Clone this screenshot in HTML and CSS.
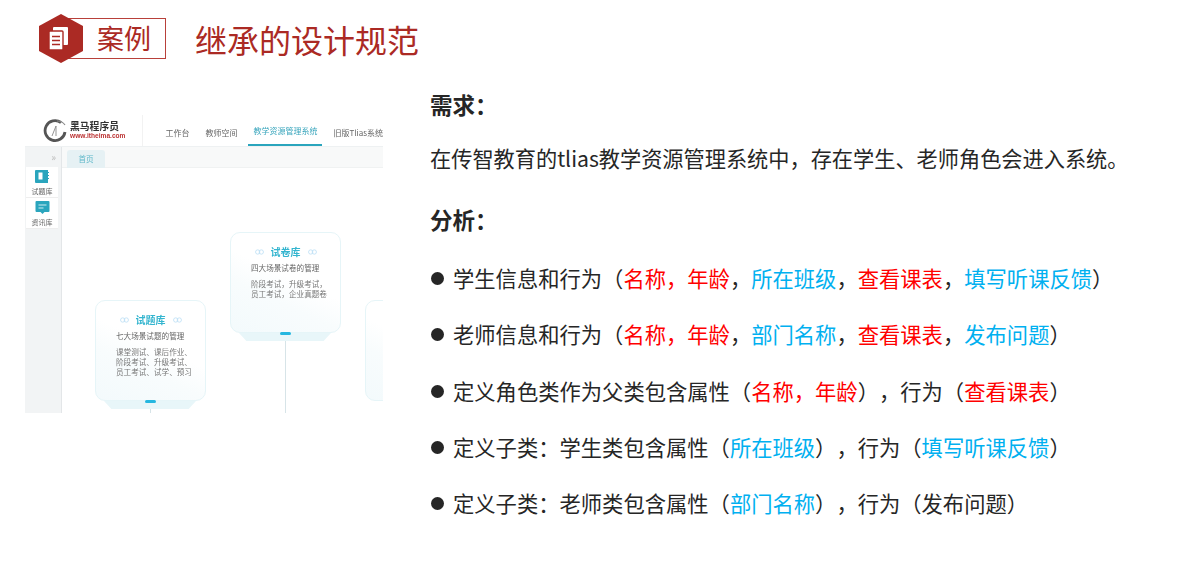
FILE: index.html
```html
<!DOCTYPE html>
<html lang="zh-CN">
<head>
<meta charset="utf-8">
<title>继承的设计规范</title>
<link rel="stylesheet" href="styles.css">
</head>
<body>
<header class="header">
  <div class="badge">
    <svg class="hex" viewBox="0 0 44 49" width="44" height="49">
      <polygon points="22,0 44,12 44,37 22,49 0,37 0,12" fill="#ab2a24"/>
      <rect x="14" y="13" width="15" height="18" rx="1" fill="#fff"/>
      <rect x="10" y="17" width="14" height="19" rx="1" fill="#fff" stroke="#ab2a24" stroke-width="1.4"/>
      <path d="M13 22.5h8M13 26.5h8M13 30.5h8" stroke="#ab2a24" stroke-width="1.5"/>
    </svg>
    <div class="tag">案例</div>
  </div>
  <h1 class="title">继承的设计规范</h1>
</header>
<main class="main">
  <section class="shot">
    <div class="topbar">
      <div class="logo">
        <svg viewBox="0 0 24 24" width="24" height="24"><path d="M18 3.5A10 10 0 1 0 22 13" fill="none" stroke="#555" stroke-width="2.8"/><path d="M22 6c-2-3-5-4-8-4" fill="none" stroke="#888" stroke-width="1.2"/><path d="M9 17l4-10v10" fill="none" stroke="#888" stroke-width=".9"/></svg>
        <div class="logo-text"><b>黑马程序员</b><span>www.itheima.com</span></div>
      </div>
      <nav class="nav">
        <span class="nav-item">工作台</span>
        <span class="nav-item">教师空间</span>
        <span class="nav-item active">教学资源管理系统</span>
        <span class="nav-item">旧版Tlias系统</span>
      </nav>
    </div>
    <div class="body">
      <aside class="side">
        <div class="collapse">»</div>
        <div class="side-item">
          <svg viewBox="0 0 14 14" width="14" height="14"><path d="M1 0h12v2h1v1h-1v2h1v1h-1v2h1v1h-1v4H1a1 1 0 0 1-1-1V1a1 1 0 0 1 1-1z" fill="#2aa5bd"/><rect x="3.5" y="2.5" width="4" height="7" fill="#fff"/></svg>
          <span>试题库</span>
        </div>
        <div class="side-item">
          <svg viewBox="0 0 14 14" width="15" height="14"><path d="M1 0h12a1 1 0 0 1 1 1v9a1 1 0 0 1-1 1H9l-2 2-2-2H1a1 1 0 0 1-1-1V1a1 1 0 0 1 1-1z" fill="#2aa5bd"/><path d="M3 4h8M3 7h5" stroke="#cfecf2"/></svg>
          <span>资讯库</span>
        </div>
      </aside>
      <div class="content">
        <div class="tabs"><span class="tab">首页</span></div>
        <div class="canvas">
          <div class="line line-a"></div>
          <div class="line line-b"></div>
          <div class="base base-a"></div>
          <div class="base base-b"></div>
          <article class="card card-a">
            <h3 class="card-title">
              <svg class="eye" viewBox="0 0 10 6" width="9" height="6"><circle cx="3" cy="3" r="2.4"/><circle cx="7" cy="3" r="2.4"/></svg>
              <span>试题库</span>
              <svg class="eye" viewBox="0 0 10 6" width="9" height="6"><circle cx="3" cy="3" r="2.4"/><circle cx="7" cy="3" r="2.4"/></svg>
            </h3>
            <p class="card-sub">七大场景试题的管理</p>
            <p class="card-text">课堂测试、课后作业、<br>阶段考试、升级考试、<br>员工考试、试学、预习</p>
          </article>
          <article class="card card-b">
            <h3 class="card-title">
              <svg class="eye" viewBox="0 0 10 6" width="9" height="6"><circle cx="3" cy="3" r="2.4"/><circle cx="7" cy="3" r="2.4"/></svg>
              <span>试卷库</span>
              <svg class="eye" viewBox="0 0 10 6" width="9" height="6"><circle cx="3" cy="3" r="2.4"/><circle cx="7" cy="3" r="2.4"/></svg>
            </h3>
            <p class="card-sub">四大场景试卷的管理</p>
            <p class="card-text">阶段考试，升级考试，<br>员工考试，企业真题卷</p>
          </article>
          <article class="card card-c"></article>
        </div>
      </div>
    </div>
  </section>
  <section class="text">
    <h2 class="head">需求：</h2>
    <p class="para">在传智教育的tlias教学资源管理系统中，存在学生、老师角色会进入系统。</p>
    <h2 class="head head-2">分析：</h2>
    <ul class="list">
      <li>学生信息和行为（<span class="r">名称，年龄</span>，<span class="b">所在班级</span>，<span class="r">查看课表</span>，<span class="b">填写听课反馈</span>）</li>
      <li>老师信息和行为（<span class="r">名称，年龄</span>，<span class="b">部门名称</span>，<span class="r">查看课表</span>，<span class="b">发布问题</span>）</li>
      <li>定义角色类作为父类包含属性（<span class="r">名称，年龄</span>），行为（<span class="r">查看课表</span>）</li>
      <li>定义子类：学生类包含属性（<span class="b">所在班级</span>），行为（<span class="b">填写听课反馈</span>）</li>
      <li>定义子类：老师类包含属性（<span class="b">部门名称</span>），行为（发布问题）</li>
    </ul>
  </section>
</main>
</body>
</html>
```

FILE: styles.css
```css
* { box-sizing: border-box; }
html, body { margin: 0; padding: 0; }
body {
  width: 1181px;
  height: 561px;
  overflow: hidden;
  background: #fff;
  font-family: "Noto Sans CJK SC", "Noto Sans", sans-serif;
  color: #262626;
  text-spacing-trim: space-all;
}
h1, h2, h3, p, ul { margin: 0; padding: 0; }

.header { display: flex; align-items: center; height: 77px; padding-left: 39px; }
.badge { position: relative; display: flex; align-items: center; justify-content: flex-end; width: 127px; height: 49px; }
.hex { position: absolute; left: 0; top: 0; z-index: 1; }
.tag {
  width: 105px;
  height: 41px;
  padding-left: 35px;
  border: 1px solid #b8403a;
  color: #ab2a24;
  font-size: 27px;
  line-height: 38px;
  font-weight: 400;
}
.title { margin-left: 29px; color: #ab2a24; font-size: 32px; font-weight: 400; line-height: 44px; }

.main { display: flex; align-items: flex-start; }
.shot { flex: none; width: 358px; height: 298px; margin: 38px 0 0 25px; overflow: hidden; filter: blur(.55px); }
.topbar { display: flex; height: 32px; border-bottom: 1px solid #eef1f2; }
.logo { display: flex; align-items: center; gap: 2px; width: 120px; padding-left: 18px; border-right: 1px solid #f2f2f2; }
.logo-text { display: flex; flex-direction: column; padding-left: 1px; }
.logo-text b { font-size: 9.8px; line-height: 11px; color: #333; white-space: nowrap; }
.logo-text span { font-size: 6.6px; line-height: 8px; color: #b33; font-family: "Liberation Sans", sans-serif; font-weight: 700; }
.nav { display: flex; padding-left: 22px; font-size: 8px; color: #666; }
.nav-item { line-height: 36px; white-space: nowrap; }
.nav-item:nth-child(1) { margin-right: 16px; }
.nav-item:nth-child(2) { margin-right: 11px; }
.nav-item:nth-child(3) { padding: 0 5px; margin-right: 11px; color: #3aa6bd; border-bottom: 2px solid #2aa5bd; line-height: 31px; }

.body { display: flex; height: 266px; }
.side { width: 37px; background: #f2f4f5; border-right: 1px solid #e3e6e8; padding-left: 1px; }
.collapse { height: 20px; padding-right: 5px; text-align: right; color: #bbb; font-size: 10px; line-height: 20px; }
.side-item {
  display: flex; flex-direction: column; align-items: center; gap: 3px;
  width: 32px; height: 31px; padding-top: 3px;
  background: #fff; color: #666; font-size: 7px; line-height: 9px;
  border-bottom: 1px solid #eee;
}
.content { flex: 1; display: flex; flex-direction: column; }
.tabs { height: 21px; padding: 3px 0 0 5px; background: #f8f9f9; border-bottom: 1px solid #f0f2f2; }
.tab {
  display: block; width: 38px; height: 18px;
  background: #e6f1f4; border-radius: 3px 3px 0 0;
  color: #5fb8c9; font-size: 7.6px; line-height: 18px; text-align: center;
}
.canvas { position: relative; flex: 1; background: #fff; overflow: hidden; }
.card {
  position: absolute; width: 111px; height: 101px; padding: 12px 0 0 20px;
  border: 1px solid #e6f5f8; border-radius: 10px;
  background: linear-gradient(25deg, #f3fafc 0%, #f8fcfd 35%, #fff 55%);
  color: #666; font-size: 7.6px;
  z-index: 1;
}
.card-a { left: 33px; top: 132px; }
.card-b { left: 168px; top: 64px; }
.card-c { left: 303px; top: 132px; }
.card-title {
  display: flex; align-items: center; justify-content: center; gap: 7px;
  width: 109px; margin-left: -20px;
  color: #34b5cf; font-size: 10px; line-height: 14px; font-weight: 700;
}
.eye { fill: none; stroke: #bcdff5; stroke-width: .9; }
.card-sub { margin-top: 3px; line-height: 12px; color: #666; }
.card-text { margin-top: 5px; line-height: 10px; color: #777; white-space: nowrap; }
.base {
  position: absolute; width: 92px; height: 8px;
  background: #e8f6f9;
  clip-path: polygon(0 0, 100% 0, 92% 100%, 8% 100%);
}
.base-a { left: 42px; top: 233px; }
.base-b { left: 177px; top: 165px; }
.line { position: absolute; width: 1px; background: #d7e4e8; }
.line-a { left: 88px; top: 236px; height: 10px; }
.line-b { left: 223px; top: 168px; height: 78px; }
.card-a::after, .card-b::after {
  content: ""; position: absolute; left: 49px; bottom: -3px; width: 11px; height: 3px;
  border-radius: 2px; background: #25b7e0;
}

.text { flex: none; margin-left: 47px; width: 750px; }
.head { margin-top: 9px; font-size: 22.5px; line-height: 36px; font-weight: 700; }
.head-2 { margin-top: 27px; }
.para { margin-top: 20px; font-size: 21.2px; line-height: 32px; white-space: nowrap; }
.list { margin-top: 25px; list-style: none; }
.list li {
  position: relative; height: 56.3px; padding-left: 23px;
  font-size: 21.3px; line-height: 32px; white-space: nowrap;
}
.list li::before {
  content: ""; position: absolute; left: 1px; top: 10px; width: 13px; height: 13px;
  border-radius: 50%; background: #262626;
}
.r { color: #ff0000; }
.b { color: #00b0f0; }
```
